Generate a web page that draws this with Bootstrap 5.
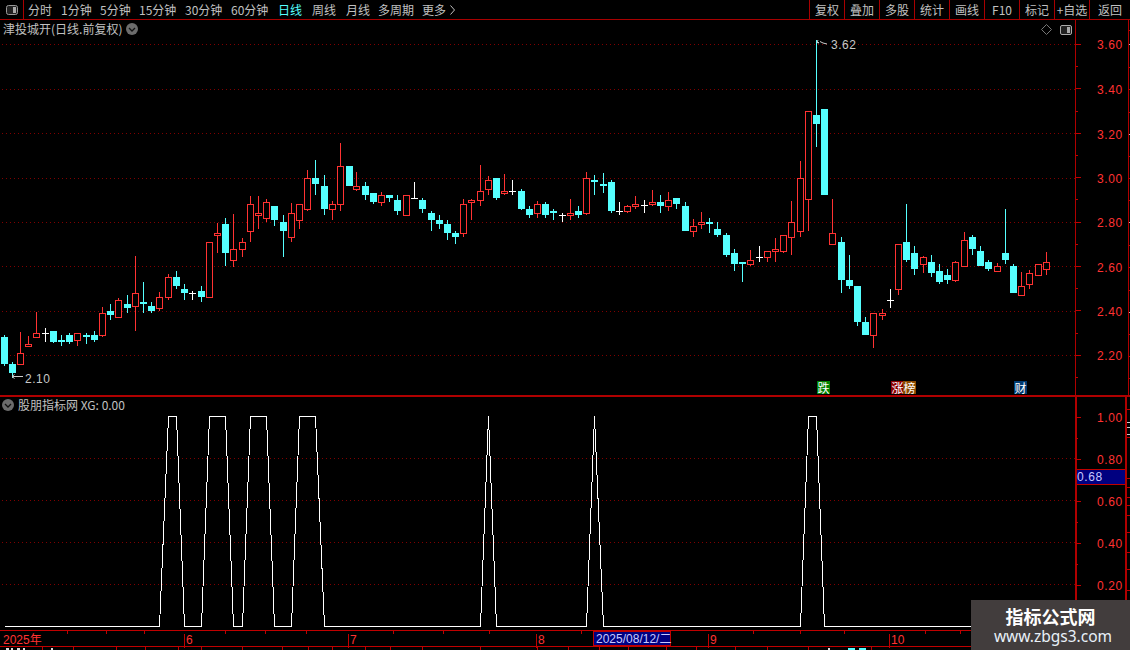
<!DOCTYPE html>
<html lang="zh"><head><meta charset="utf-8"><title>K</title>
<link href="https://cdn.jsdelivr.net/npm/bootstrap@5.3.0/dist/css/bootstrap.min.css" rel="stylesheet">
<style>
html,body{height:650px;overflow:hidden;background:#000}
body{font-family:"Noto Sans CJK SC","Liberation Sans",sans-serif;font-size:12px;color:#c0c0c0;line-height:1}
.topbar{height:20px;border-bottom:1px solid #a80000;white-space:nowrap}
.ticon{width:24px;border-right:1px solid #a80000}
.periods{gap:0;padding-left:4px}
.periods span{display:block}
.tbtn{width:35px;border-left:1px solid #a80000;text-align:center;font-size:12px}
.tbtn.lastb{width:41px}
.cyan{color:#5ff}
.pane1{height:377px;border-bottom:2px solid #b00000}
.pane2{height:233px}
.plot{width:1075px}
.chart-axis{width:55px;flex:none}
svg{display:block}
.ptitle{top:3px;left:3px;font-size:12px;color:#c0c0c0}
.ptitle2{top:2px;left:2px;color:#c0c0c0}
.ptools{top:4px;right:3px}
.timeaxis{height:17px;border-top:1px solid #c00000;border-bottom:1px solid #c00000;color:#ff3232;font-family:"Liberation Sans",sans-serif;font-size:12px}
.tl{top:3px;padding-left:1px;border-left:1px solid #c00000;height:14px}
.tk{top:0;width:1px;height:3px;background:#c00000}
.datebox{left:593px;top:0;width:78px;height:15px;background:#000080;border:1px solid #c00000;color:#c8c8ff;padding:1px 0 0 2px;white-space:nowrap;font-family:"Liberation Sans","Noto Sans CJK SC",sans-serif}
.statusrow{height:3px;overflow:hidden}
.sd{top:0;width:1px;height:3px;background:#c00000}
.sm{top:1px;height:2px;background:#ddd}
.sm.cy{background:#5ff}
.wmark{right:0;bottom:0;width:159px;height:50px;background:#423d3d;color:#fff;text-align:center}
.wm1{font-weight:700;font-size:18px;margin-top:6px;line-height:20px}
.wm2{font-family:"Noto Sans","Liberation Sans",sans-serif;font-size:15.500px;line-height:18px;color:#e8f0f8;margin-top:1px;padding-left:5px}
.mtag{bottom:1px;width:13px;height:13px;font-size:12px;line-height:13px;text-align:center;color:#fff}
</style></head>
<body class="position-relative">
<div class="topbar d-flex">
 <div class="ticon d-flex align-items-center justify-content-center">
  <svg width="14" height="12" viewBox="0 0 14 12"><rect x="1.500" y="1.500" width="11" height="9" rx="2" fill="#222" stroke="#999"/><rect x="8" y="3" width="3" height="6" fill="#aaa"/></svg>
 </div>
 <div class="periods d-flex align-items-center position-relative flex-grow-1" id="periods"></div>
 <div class="d-flex" id="rbtns"></div>
</div>
<div class="pane1 d-flex">
 <div class="plot position-relative">
  <div class="ptitle position-absolute d-flex align-items-center gap-1"><span>津投城开(日线.前复权)</span>
   <svg width="12" height="12" viewBox="0 0 12 12"><circle cx="6" cy="6" r="6" fill="#6c6c6c"/><path d="M3 5l3 3 3-3" fill="none" stroke="#111" stroke-width="1.300"/></svg></div>
  <div class="ptools position-absolute d-flex align-items-center gap-2">
   <svg width="11" height="11" viewBox="0 0 11 11"><path d="M5.500.5l5 5-5 5-5-5z" fill="none" stroke="#777"/></svg>
   <svg width="12" height="10" viewBox="0 0 12 10"><rect x=".5" y=".5" width="11" height="9" rx="1.500" fill="#222" stroke="#aaa"/><rect x="7" y="2" width="3" height="6" fill="#aaa"/></svg>
  </div>
  <svg id="kline" width="1075" height="375"></svg>
  <div class="mtag position-absolute" style="left:817px;background:#008000">跌</div>
  <div class="mtag position-absolute" style="left:891px;background:#8b0000">涨</div>
  <div class="mtag position-absolute" style="left:903px;background:#8b4a00">榜</div>
  <div class="mtag position-absolute" style="left:1014px;background:#003a70">财</div>
 </div>
 <svg class="chart-axis" id="ax1" height="375"></svg>
</div>
<div class="pane2 d-flex">
 <div class="plot position-relative">
  <div class="ptitle2 position-absolute d-flex align-items-center gap-1">
   <svg width="12" height="12" viewBox="0 0 12 12"><circle cx="6" cy="6" r="6" fill="#6c6c6c"/><path d="M3 5l3 3 3-3" fill="none" stroke="#111" stroke-width="1.300"/></svg>
   <span>股朋指标网 XG: 0.00</span></div>
  <svg id="ind" width="1075" height="233"></svg>
 </div>
 <svg class="chart-axis" id="ax2" height="233"></svg>
</div>
<div class="timeaxis position-relative" id="time">
 <span class="position-absolute" style="left:3px;top:3px;font-family:'Liberation Sans','Noto Sans CJK SC',sans-serif">2025年</span>
 <div class="datebox position-absolute">2025/08/12/二</div>
</div>
<div class="statusrow position-relative" id="status"></div>
<div class="wmark position-absolute"><div class="wm1">指标公式网</div><div class="wm2">www.zbgs3.com</div></div>
<script src="https://cdn.jsdelivr.net/npm/bootstrap@5.3.0/dist/js/bootstrap.bundle.min.js"></script>
<script>
var K=[[335,366,337,364,'c'],[362,378,364,373,'c'],[332,365,353,365,'r'],[336,347,344,347,'r'],[312,338,333,338,'r'],[328,342,333,334,'w'],[331,343,331,342,'c'],[335,346,340,342,'c'],[333,344,335,342,'c'],[333,346,333,341,'r'],[333,344,335,337,'c'],[331,342,335,340,'c'],[307,337,313,336,'r'],[304,320,311,315,'c'],[298,318,300,318,'r'],[295,313,304,308,'c'],[256,331,293,307,'r'],[282,313,302,304,'c'],[302,313,306,311,'c'],[292,311,297,309,'r'],[274,300,277,298,'r'],[271,289,277,286,'c'],[284,300,289,293,'c'],[291,300,293,294,'w'],[286,302,291,297,'c'],[242,298,242,298,'r'],[223,253,233,236,'r'],[218,266,224,253,'c'],[214,267,249,261,'r'],[238,257,242,250,'r'],[196,242,204,232,'r'],[196,229,213,216,'r'],[199,222,202,219,'r'],[206,226,206,220,'c'],[215,257,222,231,'c'],[203,242,213,238,'r'],[204,229,204,221,'r'],[170,211,178,210,'r'],[160,195,178,184,'c'],[175,215,186,209,'c'],[201,220,204,210,'r'],[143,211,166,205,'r'],[166,186,166,186,'c'],[172,191,186,190,'r'],[182,200,186,195,'c'],[193,204,193,202,'c'],[192,206,195,203,'r'],[195,202,195,198,'c'],[195,215,200,211,'c'],[195,216,195,216,'r'],[182,199,198,199,'w'],[198,213,200,209,'c'],[211,231,213,220,'c'],[215,229,220,224,'c'],[220,240,224,233,'c'],[231,244,233,237,'c'],[199,237,204,234,'r'],[199,220,200,203,'r'],[165,206,191,201,'r'],[176,195,180,190,'r'],[178,200,178,198,'c'],[174,195,191,194,'r'],[180,195,191,192,'w'],[189,210,191,209,'c'],[206,218,209,215,'c'],[201,218,204,214,'r'],[202,218,204,215,'c'],[209,220,211,213,'c'],[213,222,215,216,'w'],[199,220,213,216,'r'],[206,218,211,215,'c'],[172,215,178,214,'r'],[175,195,180,182,'c'],[173,193,184,186,'c'],[180,213,182,211,'c'],[202,215,211,212,'w'],[205,213,206,212,'r'],[196,209,204,207,'r'],[200,213,205,206,'w'],[190,206,202,205,'r'],[195,213,202,206,'c'],[192,211,200,207,'r'],[198,209,198,204,'c'],[202,231,206,231,'c'],[219,237,226,232,'r'],[212,229,222,225,'r'],[218,233,222,224,'c'],[222,237,229,235,'c'],[233,257,235,255,'c'],[249,271,253,264,'c'],[262,282,262,264,'c'],[250,266,260,265,'r'],[246,262,257,258,'w'],[251,262,251,258,'r'],[238,262,249,252,'r'],[235,253,235,252,'r'],[201,255,222,238,'r'],[161,237,178,232,'r'],[111,231,111,200,'r'],[40,147,115,124,'c'],[109,195,109,195,'c'],[199,245,233,245,'r'],[237,293,242,280,'c'],[255,289,280,286,'c'],[286,326,286,322,'c'],[317,335,322,335,'c'],[313,348,313,336,'r'],[309,320,313,316,'r'],[289,308,300,301,'w'],[244,295,244,290,'r'],[204,262,242,260,'c'],[246,275,253,269,'c'],[256,273,257,265,'r'],[255,277,262,273,'c'],[264,284,271,282,'c'],[269,284,275,280,'c'],[261,282,262,281,'r'],[232,267,240,267,'r'],[235,255,237,249,'c'],[246,266,251,266,'c'],[260,271,262,269,'c'],[263,272,266,272,'r'],[209,264,253,260,'c'],[264,293,266,293,'c'],[272,296,286,296,'r'],[270,289,273,285,'r'],[264,276,264,276,'r'],[252,275,262,270,'r']];
var CX=[4,12,20,28,36,45,53,61,69,77,86,94,102,110,118,127,135,143,151,159,168,176,184,192,201,209,217,225,233,242,250,258,266,274,283,291,299,307,315,324,332,340,349,356,365,373,381,389,397,406,414,422,431,439,447,455,463,471,480,488,496,504,512,521,529,537,545,553,562,570,578,586,594,603,611,619,627,635,644,652,660,668,676,685,693,701,709,717,726,734,742,750,759,767,775,783,791,800,808,816,824,832,841,849,857,865,873,882,890,898,906,914,923,931,939,947,955,964,972,980,988,997,1005,1013,1021,1029,1038,1046];
var OFF=20;
var col={c:'#55ffff',r:'#ff3232',w:'#ffffff'};
var s='';
[44,89,133,178,222,266,311,355].forEach(function(y){s+='<line x1="2" x2="1075" y1="'+(y-OFF+.5)+'" y2="'+(y-OFF+.5)+'" stroke="#800000" stroke-dasharray="1 3"/>';});
K.forEach(function(k,i){
 var x=CX[i],h=k[0]-OFF,l=k[1]-OFF,t=k[2]-OFF,b=k[3]-OFF,c=col[k[4]];
 s+='<rect x="'+x+'" y="'+h+'" width="1" height="'+(l-h)+'" fill="'+c+'"/>';
 if(k[4]=='c'){s+='<rect x="'+(x-3)+'" y="'+t+'" width="7" height="'+Math.max(b-t,1)+'" fill="'+c+'"/>';}
 else if(k[4]=='w'){s+='<rect x="'+(x-3)+'" y="'+t+'" width="7" height="1" fill="'+c+'"/>';}
 else{s+='<rect x="'+(x-3)+'" y="'+t+'" width="7" height="'+Math.max(b-t,1)+'" fill="#000"/><rect x="'+(x-2.5)+'" y="'+(t+.5)+'" width="6" height="'+Math.max(b-t-1,1)+'" fill="none" stroke="'+c+'"/>';}
});
s+='<path d="M817 22.500h2M818 20l-1 2.500 2 .5M820 21.500l3 1.500 4 1" fill="none" stroke="#ccc"/><text x="831" y="29" fill="#c8c8c8" font-size="12" font-family="Liberation Sans" letter-spacing=".5">3.62</text>';
s+='<path d="M12 356.500h11M12 356.500l2.500-2M12 356.500l2.500 2" fill="none" stroke="#ccc"/><text x="25" y="363" fill="#c8c8c8" font-size="12" font-family="Liberation Sans" letter-spacing=".5">2.10</text>';
document.getElementById('kline').innerHTML=s;

function axis(x2,w1,labels,ticks,offY){
 var a='<rect x="0" y="0" width="'+w1+'" height="400" fill="#b00000"/><rect x="'+x2+'" y="0" width="'+(w1==1?1:2)+'" height="400" fill="#b00000"/>';
 ticks.forEach(function(t,i){a+='<rect x="1" y="'+(t-offY)+'" width="'+(i%2?2:5)+'" height="1" fill="#c00000"/>';});
 labels.forEach(function(l){a+='<text x="22" y="'+(l[1]-offY+4.500)+'" fill="#ff3232" font-size="12" font-family="Liberation Sans" letter-spacing=".6">'+l[0]+'</text>';});
 return a;
}
var t1=[];for(var n=0;n<16;n++){t1.push(Math.round(44+n*22.2));}
var ax1=axis(53,1,[['3.60',44.5],['3.40',89],['3.20',134],['3.00',178.500],['2.80',222.500],['2.60',267],['2.40',311.500],['2.20',355.500]],t1,20);
[30,44,67,89,112,134,156,178,200,222,245,267,290,312,334,356,378].forEach(function(y,i){ax1+='<rect x="54" y="'+(y-20)+'" width="1" height="1" fill="'+(i%4==1?'#bbb':'#c00000')+'"/>';});
document.getElementById('ax1').innerHTML=ax1;
var t2=[];for(n=0;n<9;n++){t2.push(Math.round(416.500+n*21));}
var ax2=axis(50,2,[['1.00',417],['0.80',459],['0.60',501],['0.40',543],['0.20',585]],t2,397);
[422,427,434].forEach(function(y){ax2+='<rect x="52" y="'+(y-397)+'" width="3" height="1" fill="#ccc"/>';});
[409,437,478,487,497,505,515,532,552,569,590].forEach(function(y){ax2+='<rect x="52" y="'+(y-397)+'" width="3" height="1" fill="#c00000"/>';});
ax2+='<rect x="2" y="72" width="48" height="16" fill="#000080"/><rect x="2" y="72" width="48" height="1" fill="#c00000"/><rect x="2" y="87" width="48" height="1" fill="#c00000"/><text x="2" y="84" fill="#c8c8ff" font-size="12" font-family="Liberation Sans" letter-spacing=".6">0.68</text>';
document.getElementById('ax2').innerHTML=ax2;

var ind='';
[458,500,542,584].forEach(function(y){ind+='<line x1="2" x2="1075" y1="'+(y-397+.5)+'" y2="'+(y-397+.5)+'" stroke="#800000" stroke-dasharray="1 3"/>';});
var on={20:1,21:1,25:1,26:1,27:1,30:1,31:1,32:1,36:1,37:1,38:1,59:1,72:1,98:1,99:1};
var pts=[];for(var i=0;i<128;i++){pts.push((CX[i]+.5)+','+(on[i]?19.5:229.5));}
ind+='<polyline points="'+pts.join(' ')+'" fill="none" stroke="#fff" stroke-width="1" shape-rendering="crispEdges"/>';
document.getElementById('ind').innerHTML=ind;

var periods=[['分时',28],['1分钟',61],['5分钟',100],['15分钟',139],['30分钟',185],['60分钟',231],['日线',278,'cyan'],['周线',312],['月线',346],['多周期',378],['更多',422]];
var p=document.getElementById('periods'),h='';
periods.forEach(function(q,j){var nx=j<periods.length-1?periods[j+1][1]:q[1]+28;h+='<span class="'+(q[2]||'')+'" style="width:'+(nx-q[1])+'px">'+q[0]+'</span>';});
h+='<svg width="6" height="10" viewBox="0 0 6 10"><path d="M.5.5l4 4.500-4 4.500" fill="none" stroke="#c0c0c0"/></svg>';
p.innerHTML=h;
var rb=['复权','叠加','多股','统计','画线','F10','标记','+自选','返回'],r='';
rb.forEach(function(q,j){r+='<div class="tbtn d-flex align-items-center justify-content-center'+(j==8?' lastb':'')+'">'+q+'</div>';});
document.getElementById('rbtns').innerHTML=r;

var tm=document.getElementById('time'),th='';
[[6,184],[7,348],[8,536],[9,708],[10,889]].forEach(function(q){th+='<span class="tl position-absolute" style="left:'+q[1]+'px">'+q[0]+'</span>';});
[67,106,144,225,265,306,393,443,489,581,753,800,844,925,960].forEach(function(x){th+='<span class="tk position-absolute" style="left:'+x+'px"></span>';});
tm.insertAdjacentHTML('beforeend',th);
var st=document.getElementById('status'),sh='';
[42,73,116,145,178,201,242,282,308,332,365,390,422,480,537,568,599,628,666,696,735,767,808,871].forEach(function(x){sh+='<span class="sd position-absolute" style="left:'+x+'px"></span>';});
[[6,3],[11,2],[17,3],[23,2],[51,2],[828,2]].forEach(function(q){sh+='<span class="sm position-absolute" style="left:'+q[0]+'px;width:'+q[1]+'px"></span>';});
sh+='<span class="sm cy position-absolute" style="left:848px;width:7px"></span><span class="sm cy position-absolute" style="left:859px;width:7px"></span>';
st.insertAdjacentHTML('beforeend',sh);
</script>
</body></html>
